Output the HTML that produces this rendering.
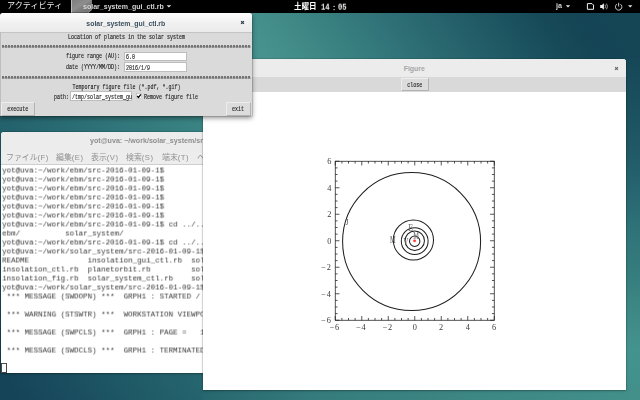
<!DOCTYPE html>
<html lang="ja">
<head>
<meta charset="utf-8">
<title>Desktop</title>
<style>
html,body{margin:0;padding:0;}
body{width:640px;height:400px;overflow:hidden;position:relative;background:#2b7078;font-family:"Liberation Sans","Noto Sans CJK JP",sans-serif;}
.abs{position:absolute;}
#wall{left:0;top:0;width:640px;height:400px;
  background:linear-gradient(56deg,#154358 1.8%,#24636d 21.7%,#3a8484 42.5%,#47928e 54.7%,#3f8886 60.3%,#367c7e 65.7%,#2e6f76 71.3%,#27636c 76.7%,#1e5662 82.3%,#174a59 87.7%,#144455 92.1%,#154656 97.4%);}
#wallr{left:620px;top:58px;width:20px;height:327px;background:linear-gradient(180deg,#164757 0%,#1a4f5e 12.8%,#1f5864 26.6%,#276570 40.4%,#2f7378 52.6%,#357c7d 64.8%,#3d8885 77%,#45938e 89.3%,#42908b 100%);}
#wallb{left:203px;top:385px;width:437px;height:15px;background:linear-gradient(90deg,#27676f 0%,#367c7d 27%,#3d8784 63%,#43908b 100%);}

/* top bar */
#topbar{left:0;top:0;width:640px;height:13.3px;background:#000;color:#fff;font-size:8px;line-height:12.7px;font-weight:bold;}
#topbar span{will-change:transform;}
#topbar span.dg{font-family:"Liberation Mono",monospace;font-size:7.2px;font-weight:bold;transform:translateY(0.6px) scaleY(1.3) rotate(0.01deg);transform-origin:50% 50%;color:#ededed;}
#topbar span{position:absolute;top:0.8px;white-space:nowrap;}

/* windows */
.win{position:absolute;box-shadow:0 1px 2.5px rgba(0,0,0,.26),0 0 0 0.5px rgba(0,0,0,.2);border-radius:3px 3px 0 0;}
#dlg.win{box-shadow:0 1.5px 5px rgba(0,0,0,.45),0 0 0 0.5px rgba(0,0,0,.25);}
.tbar{position:absolute;left:0;top:0;right:0;border-radius:3px 3px 0 0;background:#ececec;text-align:center;font-weight:bold;font-size:7.5px;white-space:nowrap;overflow:hidden;}

.mono{font-family:"Liberation Mono","DejaVu Sans Mono",monospace;}

/* dialog */
#dlg{left:0;top:14px;width:251.6px;height:101.8px;background:#dadada;}
#dlg::after{content:"";position:absolute;left:0;top:18px;width:0.8px;bottom:0;background:#bebebe;}
#dlg .tbar{top:-0.8px;height:18.8px;line-height:21.5px;font-size:6.9px;color:#3a4f5c;background:linear-gradient(#fdfdfd,#f1f1f1 50%,#ebebeb);border-bottom:0.5px solid #c4c4c4;border-radius:2.5px 2.5px 0 0;}
.t{position:absolute;font-family:"Liberation Mono",monospace;font-size:5px;color:#1c1c1c;white-space:nowrap;line-height:6px;transform:scaleY(1.3);transform-origin:0 0;will-change:transform;-webkit-text-stroke:0.1px #1c1c1c;}
#dlg .in{position:absolute;background:#fff;border:0.5px solid #bdbdbd;box-sizing:border-box;}
.btn{position:absolute;background:#dcdcdc;box-sizing:border-box;border:0.8px solid #ededed;border-right-color:#b2b2b2;border-bottom-color:#b2b2b2;}
#dlg .dash{left:1.5px;overflow:hidden;width:248.6px;color:#6a6a6a;-webkit-text-stroke:0;transform:scaleY(0.9);}
#dlg .dash::after{content:"";position:absolute;left:0.2px;top:0.3px;right:0;height:2.6px;background:repeating-linear-gradient(90deg,#747474 0,#747474 2.25px,rgba(110,110,110,0) 2.25px,rgba(110,110,110,0) 3.0005px);}

/* terminal */
#term{left:1.3px;top:132.4px;width:215px;height:241.1px;background:#fff;}
#term .tbar{height:18.6px;line-height:19.6px;color:#8e8e8e;background:#ececec;font-size:7.12px;}
#term .menu{position:absolute;left:0;top:18.6px;width:100%;height:14px;background:#ededed;color:#909090;font-size:7.9px;line-height:13.6px;white-space:nowrap;overflow:hidden;border-bottom:0.5px solid #cfcfcf;box-sizing:border-box;}
#term .menu span{position:absolute;top:0;will-change:transform;}
#term .menu i{font-style:normal;letter-spacing:0.45px;font-size:7.7px;}
#term pre{position:absolute;left:1.2px;top:34px;margin:0;font-family:"Liberation Mono",monospace;font-size:7.5px;line-height:9px;color:#363636;white-space:pre;will-change:transform;transform:translate(0.2px,0.5px) rotate(0.01deg);transform-origin:0 0;}

/* figure */
#fig{left:203px;top:58.5px;width:422.5px;height:331px;background:#fff;}
#fig .tbar{height:18.5px;line-height:19.5px;color:#a6a6a6;background:#ececec;font-size:6.9px;}
#fig .tool{position:absolute;left:0;top:18.5px;width:100%;height:15px;background:#d9d9d9;}
</style>
</head>
<body>
<div id="wall" class="abs"></div>
<div id="wallr" class="abs"></div>
<div id="wallb" class="abs"></div>

<!-- terminal window -->
<div id="term" class="win">
  <div class="tbar"><span style="position:absolute;left:88.3px;will-change:transform;">yot@uva: ~/work/solar_system/src-2016-01-09-1</span></div>
  <div class="menu"><span style="left:4.8px;">ファイル<i>(F)</i></span><span style="left:54.3px;">編集<i>(E)</i></span><span style="left:89.3px;">表示<i>(V)</i></span><span style="left:124.9px;">検索<i>(S)</i></span><span style="left:160.7px;">端末<i>(T)</i></span><span style="left:195.7px;">ヘルプ<i>(H)</i></span></div>
<pre>yot@uva:~/work/ebm/src-2016-01-09-1$
yot@uva:~/work/ebm/src-2016-01-09-1$
yot@uva:~/work/ebm/src-2016-01-09-1$
yot@uva:~/work/ebm/src-2016-01-09-1$
yot@uva:~/work/ebm/src-2016-01-09-1$
yot@uva:~/work/ebm/src-2016-01-09-1$
yot@uva:~/work/ebm/src-2016-01-09-1$ cd ../../
ebm/          solar_system/
yot@uva:~/work/ebm/src-2016-01-09-1$ cd ../../solar_system/src-2016-01-09-1/
yot@uva:~/work/solar_system/src-2016-01-09-1$ ls
README             insolation_gui_ctl.rb  solar_system_fig.rb
insolation_ctl.rb  planetorbit.rb         solar_system_gui_ctl.rb
insolation_fig.rb  solar_system_ctl.rb    solar_system_gui_fig.rb
yot@uva:~/work/solar_system/src-2016-01-09-1$ ruby solar_system_gui_ctl.rb
 *** MESSAGE (SWDOPN) ***  GRPH1 : STARTED / IWS =  2.

 *** WARNING (STSWTR) ***  WORKSTATION VIEWPORT WAS MODIFIED.

 *** MESSAGE (SWPCLS) ***  GRPH1 : PAGE =   1 COMPLETED.

 *** MESSAGE (SWDCLS) ***  GRPH1 : TERMINATED.
</pre>
  <div class="abs" style="left:0.2px;top:230.8px;width:5.3px;height:9.9px;border:0.6px solid #4a4a4a;box-sizing:border-box;"></div>
</div>

<!-- figure window -->
<div id="fig" class="win">
  <div class="tbar"><span style="will-change:transform;">Figure</span><svg class="abs" style="left:410.8px;top:7.1px;" width="5" height="5" viewBox="0 0 5 5"><path d="M1.1 1.1L3.9 3.9M3.9 1.1L1.1 3.9" stroke="#666" stroke-width="1.15" fill="none"/></svg></div>
  <div class="tool">
    <div class="btn" style="left:198px;top:0.9px;width:27.5px;height:12.8px;"></div>
    <div class="t" style="left:198px;width:27.5px;text-align:center;top:4.6px;">close</div>
  </div>
</div>

<!-- plot -->
<svg class="abs" style="left:203px;top:92px;" width="422" height="297" viewBox="203 92 422 297" font-family="Liberation Sans, sans-serif">
  <rect x="335.25" y="161.25" width="159" height="159" fill="none" stroke="#1c1c1c" stroke-width="0.75"/>
  <path d="M335.25 320.25v-4.2M335.25 161.25v4.2M335.25 161.25h4.2M494.25 161.25h-4.2M341.88 320.25v-2.3M341.88 161.25v2.3M335.25 167.88h2.3M494.25 167.88h-2.3M348.50 320.25v-2.3M348.50 161.25v2.3M335.25 174.50h2.3M494.25 174.50h-2.3M355.12 320.25v-2.3M355.12 161.25v2.3M335.25 181.12h2.3M494.25 181.12h-2.3M361.75 320.25v-4.2M361.75 161.25v4.2M335.25 187.75h4.2M494.25 187.75h-4.2M368.38 320.25v-2.3M368.38 161.25v2.3M335.25 194.38h2.3M494.25 194.38h-2.3M375.00 320.25v-2.3M375.00 161.25v2.3M335.25 201.00h2.3M494.25 201.00h-2.3M381.62 320.25v-2.3M381.62 161.25v2.3M335.25 207.62h2.3M494.25 207.62h-2.3M388.25 320.25v-4.2M388.25 161.25v4.2M335.25 214.25h4.2M494.25 214.25h-4.2M394.88 320.25v-2.3M394.88 161.25v2.3M335.25 220.88h2.3M494.25 220.88h-2.3M401.50 320.25v-2.3M401.50 161.25v2.3M335.25 227.50h2.3M494.25 227.50h-2.3M408.12 320.25v-2.3M408.12 161.25v2.3M335.25 234.12h2.3M494.25 234.12h-2.3M414.75 320.25v-4.2M414.75 161.25v4.2M335.25 240.75h4.2M494.25 240.75h-4.2M421.38 320.25v-2.3M421.38 161.25v2.3M335.25 247.38h2.3M494.25 247.38h-2.3M428.00 320.25v-2.3M428.00 161.25v2.3M335.25 254.00h2.3M494.25 254.00h-2.3M434.62 320.25v-2.3M434.62 161.25v2.3M335.25 260.62h2.3M494.25 260.62h-2.3M441.25 320.25v-4.2M441.25 161.25v4.2M335.25 267.25h4.2M494.25 267.25h-4.2M447.88 320.25v-2.3M447.88 161.25v2.3M335.25 273.88h2.3M494.25 273.88h-2.3M454.50 320.25v-2.3M454.50 161.25v2.3M335.25 280.50h2.3M494.25 280.50h-2.3M461.12 320.25v-2.3M461.12 161.25v2.3M335.25 287.12h2.3M494.25 287.12h-2.3M467.75 320.25v-4.2M467.75 161.25v4.2M335.25 293.75h4.2M494.25 293.75h-4.2M474.38 320.25v-2.3M474.38 161.25v2.3M335.25 300.38h2.3M494.25 300.38h-2.3M481.00 320.25v-2.3M481.00 161.25v2.3M335.25 307.00h2.3M494.25 307.00h-2.3M487.62 320.25v-2.3M487.62 161.25v2.3M335.25 313.62h2.3M494.25 313.62h-2.3M494.25 320.25v-4.2M494.25 161.25v4.2M335.25 320.25h4.2M494.25 320.25h-4.2" stroke="#1c1c1c" stroke-width="0.75" fill="none"/>
  <g fill="none" stroke="#1e1e1e" stroke-width="1.02">
    <circle cx="411.6" cy="241.6" r="69"/>
    <circle cx="413.4" cy="240" r="20.1"/>
    <circle cx="414.7" cy="241.2" r="13.4"/>
    <circle cx="414.75" cy="240.75" r="9.7"/>
    <circle cx="414.7" cy="241.3" r="5.2"/>
  </g>
  <circle cx="414.6" cy="240.85" r="1.45" fill="#ff3c3c"/>
  <g font-family="Liberation Serif, serif" font-size="10.2" fill="#6e6e6e" stroke="#6e6e6e" stroke-width="0.12" text-anchor="middle">
    <text transform="translate(392.8 243) scale(0.63 1)">M</text>
    <text transform="translate(410.6 230.6) scale(0.76 1)">E</text>
    <text transform="translate(416 239) scale(0.63 1)">M</text>
    <text transform="translate(405.8 245.4) scale(0.66 1)">V</text>
    <text transform="translate(346.9 224.6) scale(0.85 1)" font-size="7.5" fill="#444">J</text>
  </g>
  <g font-family="Liberation Serif, serif" font-size="8.3" fill="#3a3a3a" text-anchor="middle"><text x="334.8" y="329.7" letter-spacing="0.6">−6</text><text x="361.2" y="329.7" letter-spacing="0.6">−4</text><text x="387.8" y="329.7" letter-spacing="0.6">−2</text><text x="414.8" y="329.7">0</text><text x="441.2" y="329.7">2</text><text x="467.8" y="329.7">4</text><text x="494.2" y="329.7">6</text></g>
  <g font-family="Liberation Serif, serif" font-size="8.3" fill="#3a3a3a" text-anchor="end"><text x="331.4" y="164.1">6</text><text x="331.4" y="190.6">4</text><text x="331.4" y="217.1">2</text><text x="331.4" y="243.6">0</text><text x="331.4" y="270.1" letter-spacing="0.6">−2</text><text x="331.4" y="296.6" letter-spacing="0.6">−4</text><text x="331.4" y="323.1" letter-spacing="0.6">−6</text></g>
</svg>

<!-- dialog -->
<div class="abs" style="left:0;top:13px;width:4px;height:3px;background:#000;"></div>
<div id="dlg" class="win">
  <div class="tbar">solar_system_gui_ctl.rb<svg class="abs" style="left:240px;top:6.5px;" width="5" height="5" viewBox="0 0 5 5"><path d="M1.1 1.1L3.9 3.9M3.9 1.1L1.1 3.9" stroke="#2e3f4c" stroke-width="1.3" fill="none"/></svg></div>
  <div class="t" style="left:0.6px;width:251px;text-align:center;top:20.1px;">Location of planets in the solar system</div>
  <div class="t dash" style="top:31.4px;">===================================================================================</div>
  <div class="t" style="left:0;width:120px;text-align:right;top:39.2px;">figure range (AU):</div>
  <div class="in" style="left:124px;top:37.5px;width:62.5px;height:9.75px;"></div>
  <div class="t" style="left:126px;top:40.1px;">6.0</div>
  <div class="t" style="left:0;width:120px;text-align:right;top:49.8px;">date (YYYY/MM/DD):</div>
  <div class="in" style="left:124px;top:48.25px;width:62.5px;height:9.4px;"></div>
  <div class="t" style="left:126px;top:50.5px;">2016/1/9</div>
  <div class="t dash" style="top:62.2px;">===================================================================================</div>
  <div class="t" style="left:0.6px;width:251px;text-align:center;top:70.1px;">Temporary figure file (*.pdf, *.gif)</div>
  <div class="t" style="left:53.5px;top:79.8px;">path:</div>
  <div class="in" style="left:70.3px;top:77.4px;width:62.1px;height:9.9px;"></div>
  <div class="t" style="left:71.6px;top:79.8px;">/tmp/solar_system_gu</div>
  <svg class="abs" style="left:135.9px;top:79.3px;" width="6.2" height="6.2" viewBox="0 0 6.2 6.2"><rect x="0.4" y="0.4" width="5.3" height="5.3" fill="#fff" stroke="#9a9a9a" stroke-width="0.4"/><path d="M1.2 3L2.5 4.5L4.9 1.4" fill="none" stroke="#000" stroke-width="1.3"/></svg>
  <div class="t" style="left:143.8px;top:79.6px;">Remove figure file</div>
  <div class="btn" style="left:1px;top:88.1px;width:33.9px;height:13.7px;"></div>
  <div class="t" style="left:1px;width:33.75px;text-align:center;top:92.4px;">execute</div>
  <div class="btn" style="left:226.2px;top:88.1px;width:25px;height:13.7px;"></div>
  <div class="t" style="left:226px;width:24.25px;text-align:center;top:92.4px;">exit</div>
</div>

<!-- top bar -->
<div id="topbar" class="abs">
  <span style="left:6.6px;font-weight:400;font-size:8.1px;color:#ececec;top:0.2px;">アクティビティ</span>
  <svg class="abs" style="left:71.4px;top:0;" width="21" height="12.7" viewBox="0 0 21 12.7"><defs><linearGradient id="ig" x1="0" y1="0" x2="1" y2="1"><stop offset="0" stop-color="#7c7c7c"/><stop offset="0.45" stop-color="#8e8e8e"/><stop offset="0.55" stop-color="#808080"/><stop offset="1" stop-color="#6e6e6e"/></linearGradient></defs><path d="M0 0H21V9.4L17.4 12.7H0z" fill="url(#ig)"/><path d="M0.4 0V12.7" stroke="#dcdcdc" stroke-width="0.7"/><path d="M21 9.4L17.4 12.7" stroke="#c8c8c8" stroke-width="0.6"/></svg>
  <span style="left:82.6px;font-size:7.05px;color:#d4d4d4;">solar_system_gui_ctl.rb</span>
  <span style="left:293.5px;font-size:7.55px;top:1.1px;">土曜日</span>
  <span class="dg" style="left:321.4px;">14</span>
  <span style="left:330.9px;font-size:6.2px;top:1.9px;">：</span>
  <span class="dg" style="left:338.3px;">05</span>
  <span style="left:556.3px;font-size:7.2px;font-weight:bold;color:#d2d2d2;top:0.3px;">ja</span>
</div>
<svg class="abs" style="left:160px;top:0;" width="480" height="13" viewBox="160 0 480 13">
  <path d="M166.6 5.2h4.6l-2.3 2.4z" fill="#e6e6e6"/>
  <path d="M565.8 5.2h4.4l-2.2 2.4z" fill="#e6e6e6"/>
  <path d="M628 5.2h4.4l-2.2 2.4z" fill="#e6e6e6"/>
  <path d="M587.4 3.6h4.6l1.5 1.5v4.2h-6.1z" fill="none" stroke="#f0f0f0" stroke-width="1"/>
  <path d="M600.2 5.1h1.7l2-1.9v6.6l-2-1.9h-1.7z" fill="#f0f0f0"/>
  <path d="M605 4.7q1.1 1.8 0 3.6M606.5 3.6q2 2.9 0 5.8" fill="none" stroke="#bdbdbd" stroke-width="0.8"/>
  <path d="M616.9 4.2a3.2 3.2 0 1 0 3.5 0" fill="none" stroke="#e8e8e8" stroke-width="0.9"/>
  <path d="M618.65 2.8v3.7" stroke="#e8e8e8" stroke-width="0.9"/>
</svg>
</body>
</html>
